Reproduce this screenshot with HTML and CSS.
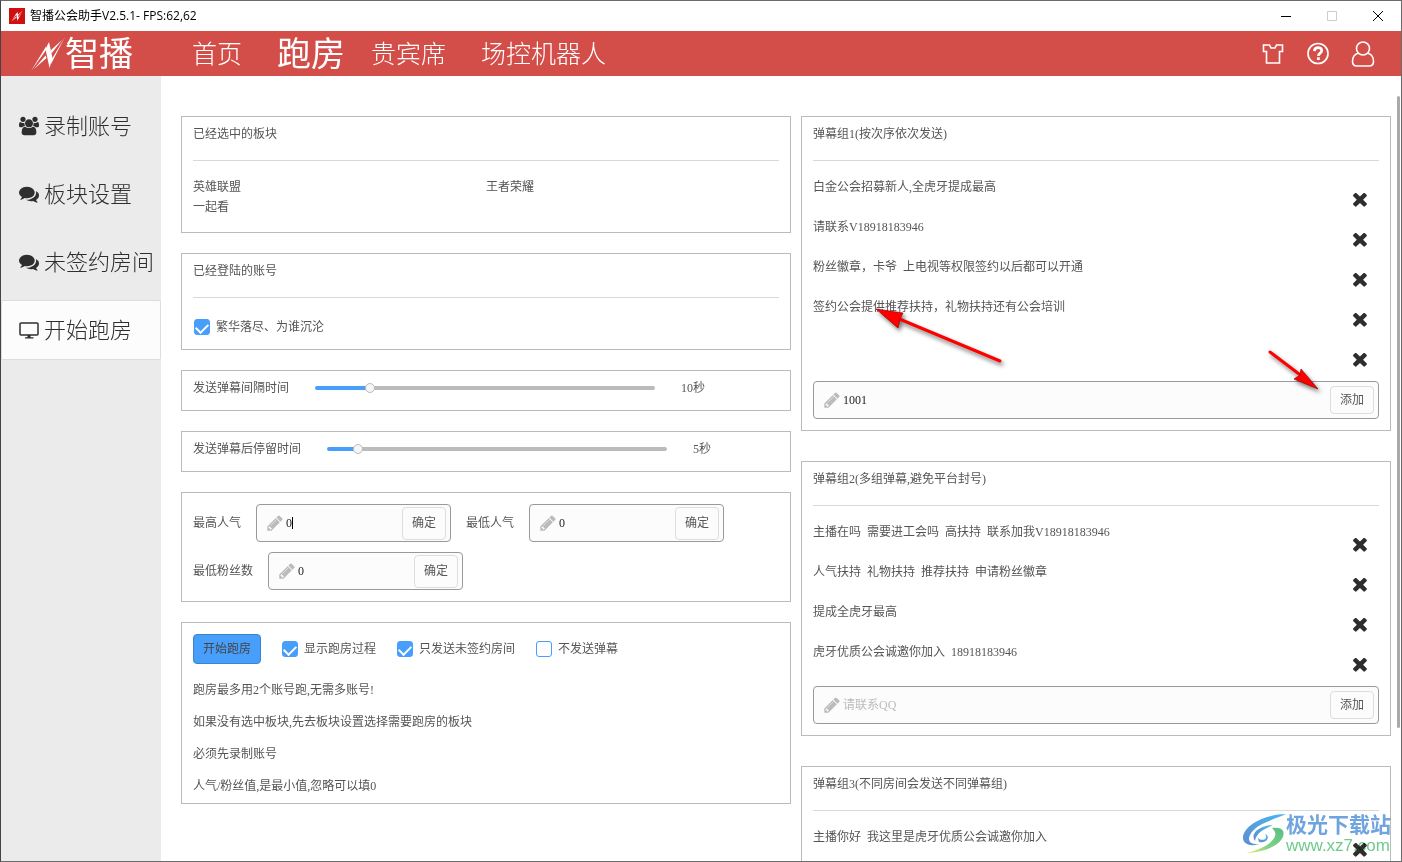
FILE: index.html
```html
<!DOCTYPE html>
<html lang="zh-CN">
<head>
<meta charset="utf-8">
<title>智播公会助手V2.5.1</title>
<link rel="stylesheet" href="styles.css">
</head>
<body>
<svg class="sprite" aria-hidden="true">
  <symbol id="pencil" viewBox="0 0 1792 1792"><path d="M491 1536l91-91-235-235-91 91v107h128v128h107zm523-928q0-22-22-22-10 0-17 7l-542 542q-7 7-7 17 0 22 22 22 10 0 17-7l542-542q7-7 7-17zm-54-192l416 416-832 832h-416v-416zm683 96q0 53-37 90l-166 166-416-416 166-165q36-38 90-38 53 0 91 38l235 234q37 39 37 91z"/></symbol>
  <symbol id="times" viewBox="300 380 1200 1200"><path d="M1490 1322q0 40-28 68l-136 136q-28 28-68 28t-68-28l-294-294-294 294q-28 28-68 28t-68-28l-136-136q-28-28-28-68t28-68l294-294-294-294q-28-28-28-68t28-68l136-136q28-28 68-28t68 28l294 294 294-294q28-28 68-28t68 28l136 136q28 28 28 68t-28 68l-294 294 294 294q28 28 28 68z"/></symbol>
  <symbol id="comments" viewBox="0 0 1792 1792"><path d="M1408 768q0 139-94 257t-256.5 186.5-353.5 68.5q-86 0-176-16-124 88-278 128-36 9-86 16h-3q-11 0-20.5-8t-11.5-21q-1-3-1-6.5t.5-6.5 2-6l2.5-5 3.5-5.5 4-5 4.5-5 4-4.5q5-6 23-25t26-29.5 22.5-29 25-38.5 20.5-44q-124-72-195-177t-71-224q0-139 94-257t256.5-186.5 353.5-68.5 353.5 68.5 256.5 186.5 94 257zm384 256q0 120-71 224.5t-195 176.5q10 24 20.5 44t25 38.5 22.5 29 26 29.5 23 25q1 1 4 4.5t4.5 5 4 5 3.5 5.5l2.5 5 2 6 .5 6.5-1 6.5q-3 14-13 22t-22 7q-50-7-86-16-154-40-278-128-90 16-176 16-271 0-472-132 58 4 88 4 161 0 309-45t264-129q125-92 192-212t67-254q0-77-23-152 129 71 204 178t75 230z"/></symbol>
  <symbol id="users" viewBox="0 0 1920 1792"><path d="M593 896q-162 5-265 128h-134q-82 0-138-40.5t-56-118.5q0-353 124-353 6 0 43.500 21t97.500 42.500 119 21.500q67 0 133-23-5 37-5 66 0 139 81 256zm1071 637q0 120-73 189.500t-194 69.500h-874q-121 0-194-69.500t-73-189.500q0-53 3.500-103.500t14-109 26.500-108.500 43-97.500 62-81 85.500-53.500 111.500-20q10 0 43 21.500t73 48 107 48 135 21.500 135-21.500 107-48 73-48 43-21.500q61 0 111.500 20t85.500 53.500 62 81 43 97.500 26.500 108.500 14 109 3.500 103.500zm-1024-1277q0 106-75 181t-181 75-181-75-75-181 75-181 181-75 181 75 75 181zm704 384q0 159-112.500 271.500t-271.500 112.500-271.500-112.500-112.500-271.500 112.500-271.500 271.500-112.500 271.500 112.500 112.500 271.500zm576 225q0 78-56 118.500t-138 40.500h-134q-103-123-265-128 81-117 81-256 0-29-5-66 66 23 133 23 59 0 119-21.500t97.500-42.500 43.500-21q124 0 124 353zm-128-609q0 106-75 181t-181 75-181-75-75-181 75-181 181-75 181 75 75 181z"/></symbol>
  <symbol id="desktop" viewBox="0 0 20 20"><rect x="1" y="3" width="18" height="12" rx="1" fill="none" stroke="currentColor" stroke-width="1.500"/><path d="M8.500 15h3v2.500h-3zM6 17.200h8.500v1.200h-8.500z"/></symbol>
  <symbol id="bolt" viewBox="0 0 34 34"><path d="M14.500 12L18 5 21.500 21 18.500 31z"/><path d="M0 34L15 9.500 15.500 12.500zM3 32L14.500 18.500 15.500 21z"/><path d="M34 0L20 27 20 23.500zM31 3L19.500 13.500 20.500 16.500z"/></symbol>
</svg>

<div class="window">
  <div class="titlebar">
    <span class="app-icon"><svg><use href="#bolt"/></svg></span>
    <span class="app-title">智播公会助手V2.5.1- FPS:62,62</span>
    <div class="window-buttons">
      <button aria-label="最小化"><svg viewBox="0 0 12 12"><path d="M1 6.500h10"/></svg></button>
      <button aria-label="最大化" disabled><svg viewBox="0 0 12 12"><path d="M1.500 1.500h9v9h-9z"/></svg></button>
      <button aria-label="关闭"><svg viewBox="0 0 12 12"><path d="M1 1l10 10M11 1L1 11"/></svg></button>
    </div>
  </div>

  <header class="header">
    <div class="brand"><svg><use href="#bolt"/></svg><span>智播</span></div>
    <nav class="tabs">
      <a class="tab tab-home" href="#">首页</a>
      <a class="tab tab-active" href="#">跑房</a>
      <a class="tab tab-vip" href="#">贵宾席</a>
      <a class="tab" href="#">场控机器人</a>
    </nav>
    <div class="tools">
      <button aria-label="换肤"><svg viewBox="0 0 24 26"><path d="M2.500 4h6l1.500 3h4l1.500-3h6v6.500h-3v11.500h-13v-11.500h-3z" fill="none" stroke="#fff" stroke-width="1.600"/></svg></button>
      <button aria-label="帮助"><svg viewBox="0 0 24 26"><circle cx="12" cy="12.500" r="10" fill="none" stroke="#fff" stroke-width="1.700"/><path d="M8.400 10.100C8.500 5.300 15.900 5.500 15.700 9.800C15.600 12.200 12.500 12 12.300 14.800" fill="none" stroke="#fff" stroke-width="2.700"/><path d="M10.900 16.300h2.900v2.700h-2.900z" fill="#fff"/></svg></button>
      <button aria-label="用户"><svg viewBox="0 0 24 26"><circle cx="12" cy="7.500" r="6.500" fill="none" stroke="#fff" stroke-width="1.600"/><path d="M7 12.300C3 13.500 1.500 17 1.500 20.500C1.500 23.500 3 25 6 25h12c3 0 4.500-1.500 4.500-4.500C22.500 17 21 13.500 17 12.300" fill="none" stroke="#fff" stroke-width="1.600"/></svg></button>
    </div>
  </header>

  <div class="body">
    <nav class="sidebar">
      <a class="side-item" href="#"><svg><use href="#users"/></svg><span>录制账号</span></a>
      <a class="side-item" href="#"><svg><use href="#comments"/></svg><span>板块设置</span></a>
      <a class="side-item" href="#"><svg><use href="#comments"/></svg><span>未签约房间</span></a>
      <a class="side-item side-active" href="#"><svg><use href="#desktop"/></svg><span>开始跑房</span></a>
    </nav>

    <main class="main">
      <div class="column settings">
        <section class="panel">
          <h2>已经选中的板块</h2>
          <ul class="boards"><li>英雄联盟</li><li>王者荣耀</li><li>一起看</li></ul>
        </section>
        <section class="panel">
          <h2>已经登陆的账号</h2>
          <div class="accounts"><label class="check"><input type="checkbox" checked>繁华落尽、为谁沉沦</label></div>
        </section>
        <section class="panel slider-row">
          <label for="interval">发送弹幕间隔时间</label>
          <input id="interval" class="slider slider-interval" type="range" min="0" max="100" value="15">
          <output for="interval">10秒</output>
        </section>
        <section class="panel slider-row">
          <label for="stay">发送弹幕后停留时间</label>
          <input id="stay" class="slider slider-stay" type="range" min="0" max="100" value="8">
          <output for="stay">5秒</output>
        </section>
        <section class="panel limits">
          <div class="limit"><label for="max-pop">最高人气</label><div class="field"><svg><use href="#pencil"/></svg><input id="max-pop" type="text" value="0"><i class="caret"></i><button>确定</button></div></div>
          <div class="limit"><label for="min-pop">最低人气</label><div class="field"><svg><use href="#pencil"/></svg><input id="min-pop" type="text" value="0"><button>确定</button></div></div>
          <div class="limit"><label for="min-fans">最低粉丝数</label><div class="field"><svg><use href="#pencil"/></svg><input id="min-fans" type="text" value="0"><button>确定</button></div></div>
        </section>
        <section class="panel run">
          <div class="run-row">
            <button class="start">开始跑房</button>
            <label class="check"><input type="checkbox" checked>显示跑房过程</label>
            <label class="check"><input type="checkbox" checked>只发送未签约房间</label>
            <label class="check"><input type="checkbox">不发送弹幕</label>
          </div>
          <p>跑房最多用2个账号跑,无需多账号!</p>
          <p>如果没有选中板块,先去板块设置选择需要跑房的板块</p>
          <p>必须先录制账号</p>
          <p>人气/粉丝值,是最小值,忽略可以填0</p>
        </section>
      </div>

      <div class="column groups">
        <section class="panel group">
          <h2>弹幕组1(按次序依次发送)</h2>
          <ul class="messages">
            <li><span>白金公会招募新人,全虎牙提成最高</span><button aria-label="删除"><svg><use href="#times"/></svg></button></li>
            <li><span>请联系V18918183946</span><button aria-label="删除"><svg><use href="#times"/></svg></button></li>
            <li><span>粉丝徽章，卡爷&ensp;上电视等权限签约以后都可以开通</span><button aria-label="删除"><svg><use href="#times"/></svg></button></li>
            <li><span>签约公会提供推荐扶持，礼物扶持还有公会培训</span><button aria-label="删除"><svg><use href="#times"/></svg></button></li>
            <li><span></span><button aria-label="删除"><svg><use href="#times"/></svg></button></li>
          </ul>
          <div class="field field-wide"><svg><use href="#pencil"/></svg><input type="text" aria-label="弹幕组1" value="1001"><button>添加</button></div>
        </section>
        <section class="panel group">
          <h2>弹幕组2(多组弹幕,避免平台封号)</h2>
          <ul class="messages">
            <li><span>主播在吗&ensp;需要进工会吗&ensp;高扶持&ensp;联系加我V18918183946</span><button aria-label="删除"><svg><use href="#times"/></svg></button></li>
            <li><span>人气扶持&ensp;礼物扶持&ensp;推荐扶持&ensp;申请粉丝徽章</span><button aria-label="删除"><svg><use href="#times"/></svg></button></li>
            <li><span>提成全虎牙最高</span><button aria-label="删除"><svg><use href="#times"/></svg></button></li>
            <li><span>虎牙优质公会诚邀你加入&ensp;18918183946</span><button aria-label="删除"><svg><use href="#times"/></svg></button></li>
          </ul>
          <div class="field field-wide"><svg><use href="#pencil"/></svg><input type="text" aria-label="弹幕组2" placeholder="请联系QQ"><button>添加</button></div>
        </section>
        <section class="panel group">
          <h2>弹幕组3(不同房间会发送不同弹幕组)</h2>
          <ul class="messages">
            <li><span>主播你好&ensp;我这里是虎牙优质公会诚邀你加入</span><button aria-label="删除"><svg><use href="#times"/></svg></button></li>
          </ul>
        </section>
      </div>
      <div class="scroll-thumb"></div>
    </main>
  </div>

  <svg class="arrow arrow-message" viewBox="0 0 140 80"><path d="M127 61L24 18" stroke="#f00" stroke-width="3" stroke-linecap="round"/><path d="M3 9L30 13 27 19 25 28z" fill="#f00" stroke="#900" stroke-width=".7"/></svg>
  <svg class="arrow arrow-add" viewBox="0 0 70 60"><path d="M11 12L44 37" stroke="#f00" stroke-width="3" stroke-linecap="round"/><path d="M59 49L35 39 41 35 42 29z" fill="#f00" stroke="#900" stroke-width=".7"/></svg>

  <div class="watermark">
    <svg viewBox="0 0 44 42">
      <defs>
        <linearGradient id="sky" x1="1" y1="0" x2="0" y2="1"><stop offset="0" stop-color="#4bb6ee"/><stop offset="1" stop-color="#5c8ed2"/></linearGradient>
        <linearGradient id="leaf" x1="1" y1="0" x2="0" y2="1"><stop offset="0" stop-color="#54bd86"/><stop offset=".6" stop-color="#82d486"/><stop offset="1" stop-color="#f5ee70"/></linearGradient>
      </defs>
      <path d="M44 1C24 1 1 12 1 25C1 31 9 34 17 31C9 32 5 28 8 22C13 11 31 7 44 1Z" fill="url(#sky)"/>
      <path d="M13 28C8 21 16 13 31 12C22 16 14 20 13 28Z" fill="url(#sky)"/>
      <path d="M16 25C20 29 27 26 23 21C29 23 25 31 17 29Z" fill="url(#sky)"/>
      <path d="M30 15C35 14 40 15 41 18C45 28 26 40 4 40C19 37 36 28 33 19C32 17 31 16 30 15Z" fill="url(#leaf)"/>
    </svg>
    <div class="watermark-text"><strong>极光下载站</strong><span>www.xz7.com</span></div>
  </div>
</div>
</body>
</html>
```
FILE: styles.css
```css
* { box-sizing: border-box; }
body, h2, p, ul { margin: 0; padding: 0; }
ul { list-style: none; }
a { color: inherit; text-decoration: none; }
button, input { font: inherit; color: inherit; margin: 0; padding: 0; }
button { border: 0; background: none; }
svg { display: block; flex: none; fill: currentColor; }

body {
  font: 12px/20px "Liberation Serif", "Noto Sans CJK SC", serif;
  color: #555;
  background: #fff;
}
.sprite { position: absolute; width: 0; height: 0; }

.window {
  position: relative;
  display: flex;
  flex-direction: column;
  height: 100vh;
  overflow: hidden;
  border: 1px solid #6b6b6b;
  border-left-color: #444;
}

.titlebar {
  flex: none;
  display: flex;
  align-items: center;
  height: 30px;
  padding-left: 8px;
  color: #000;
  font-family: "Open Sans", "Noto Sans CJK SC", sans-serif;
}
.app-icon { width: 16px; height: 16px; padding: 2px; background: #d01010; color: #fff; }
.app-icon svg { width: 12px; height: 12px; }
.app-title { margin-left: 5px; }
.window-buttons { display: flex; margin-left: auto; }
.window-buttons button { display: grid; place-items: center; width: 46px; height: 30px; }
.window-buttons svg { width: 12px; height: 12px; fill: none; stroke: #000; }
.window-buttons button:disabled svg { stroke: #ccc; }

.header {
  flex: none;
  display: flex;
  align-items: center;
  height: 45px;
  padding: 0 26px 0 30px;
  background: #d44e49;
  color: #fff;
  font-weight: 300;
}
.brand { display: flex; align-items: center; width: 161px; font-size: 34px; font-weight: 400; line-height: 44px; }
.brand svg { width: 34px; height: 34px; }
.brand span, .tabs { padding-top: 2px; }
.tabs { display: flex; align-items: center; font-size: 25px; line-height: 44px; }
.tab-home, .tab-vip { margin-right: 35px; }
.tab-active { margin-right: 26px; font-size: 34px; font-weight: 400; }
.tools { display: flex; gap: 21px; margin-left: auto; }
.tools button, .tools svg { width: 24px; height: 26px; }

.body { flex: 1; display: flex; min-height: 0; }
.sidebar {
  flex: none;
  display: flex;
  flex-direction: column;
  gap: 8px;
  width: 160px;
  padding-top: 20px;
  background: #ebebeb;
  color: #2e2e2e;
  font-size: 22px;
  font-weight: 300;
}
.side-item {
  display: flex;
  align-items: center;
  gap: 5px;
  height: 60px;
  padding-left: 17px;
  border: 1px solid transparent;
  border-radius: 2px;
  white-space: nowrap;
}
.side-item span { padding-top: 2px; }
.side-item svg { width: 20px; height: 20px; }
.side-active { background: #fcfcfc; border-color: #ddd; }

.main {
  position: relative;
  flex: 1;
  display: grid;
  grid-template-columns: 61fr 59fr;
  gap: 10px;
  align-items: start;
  padding: 40px 10px 0 20px;
  overflow: hidden;
}
.column { display: flex; flex-direction: column; min-width: 0; }
.settings { gap: 20px; }
.groups { gap: 30px; }
.scroll-thumb { position: absolute; top: 20px; right: 1px; width: 3px; height: 632px; border-radius: 2px; background: #aaa; }

.panel { padding: 7px 11px 12px; border: 1px solid #bbb; }
.panel h2 { padding-bottom: 16px; margin-bottom: 16px; border-bottom: 1px solid #d8d8d8; font-size: 12px; font-weight: 400; }
.boards { display: grid; grid-template-columns: 1fr 1fr; padding-bottom: 3px; }
.accounts { display: flex; padding-top: 3px; }

.check { display: flex; align-items: center; gap: 6px; }
.check input {
  appearance: none;
  display: grid;
  justify-content: center;
  align-content: start;
  width: 16px;
  height: 16px;
  margin: 0 0 0 1px;
  border: 1px solid #489ffb;
  border-radius: 3px;
  background: #fff;
}
.check input:checked { background: #489ffb; }
.check input:checked::before {
  content: "";
  width: 10px;
  height: 6px;
  margin-top: 3px;
  border: solid #fff;
  border-width: 0 0 2px 2px;
  transform: rotate(-45deg);
}

.slider-row { display: flex; align-items: center; gap: 26px; }
.slider { appearance: none; flex: 0 1 340px; height: 10px; background: none; }
.slider::-webkit-slider-runnable-track { height: 4px; border-radius: 2px; background: #bbb; }
.slider-interval::-webkit-slider-runnable-track { background: linear-gradient(to right, #489ffb 16%, #bbb 16%); }
.slider-stay::-webkit-slider-runnable-track { background: linear-gradient(to right, #489ffb 9%, #bbb 9%); }
.slider::-webkit-slider-thumb {
  appearance: none;
  width: 10px;
  height: 10px;
  margin-top: -3px;
  border: 1px solid #bbb;
  border-radius: 50%;
  background: #f5f5f5;
}

.limits { display: flex; flex-wrap: wrap; gap: 10px 15px; padding: 11px; }
.limit { display: flex; align-items: center; gap: 15px; }
.field {
  position: relative;
  display: flex;
  align-items: center;
  width: 195px;
  height: 38px;
  padding: 0 4px 0 9px;
  border: 1px solid #999;
  border-radius: 4px;
  background: #fcfcfc;
}
.field svg { width: 18px; height: 18px; color: #bbb; }
.field input { flex: 1; min-width: 0; height: 30px; padding-left: 2px; border: 0; outline: 0; background: none; color: #222; }
.field input::placeholder { color: #bbb; }
.field button { width: 44px; height: 33px; border: 1px solid #ddd; border-radius: 4px; }
.caret { position: absolute; left: 35px; top: 12px; width: 1px; height: 12px; background: #000; }
.field-wide { width: auto; margin-top: 4px; }
.field-wide button { height: 28px; }
.group { padding-bottom: 11px; }

.run { padding: 11px 11px 1px; }
.run-row { display: flex; align-items: center; gap: 20px; margin-bottom: 10px; }
.start { width: 68px; height: 30px; border: 1px solid #3d83cc; border-radius: 4px; background: #489ffb; color: #444; }
.run p { line-height: 32px; }

.messages li { display: flex; justify-content: space-between; height: 40px; padding-right: 12px; }
.messages button { width: 14px; height: 14px; margin-top: 16px; color: #2e2e2e; }
.messages svg { width: 14px; height: 14px; }

.arrow { position: absolute; filter: drop-shadow(2px 3px 2px #0008); pointer-events: none; }
.arrow-message { left: 872px; top: 299px; width: 140px; height: 80px; }
.arrow-add { left: 1258px; top: 339px; width: 70px; height: 60px; }
.watermark { position: absolute; right: 10px; bottom: 6px; display: flex; align-items: center; mix-blend-mode: multiply; }
.watermark svg { width: 44px; height: 42px; }
.watermark-text { display: flex; flex-direction: column; font-family: "Liberation Sans", "Noto Sans CJK SC", sans-serif; }
.watermark strong { color: #6fa4df; font-size: 21px; line-height: 24px; }
.watermark span { color: #6ecb8c; font-size: 17px; line-height: 18px; }
```
